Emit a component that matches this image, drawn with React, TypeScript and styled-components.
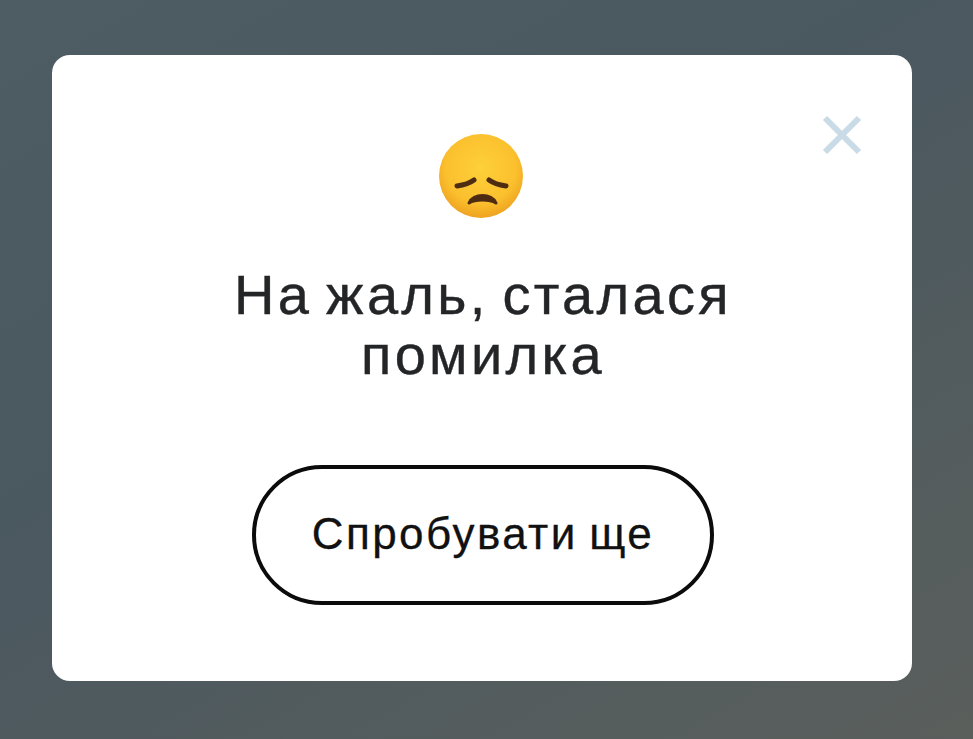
import React from "react";
import styled, { createGlobalStyle } from "styled-components";

const GlobalStyle = createGlobalStyle`
  html, body {
    margin: 0;
    padding: 0;
    height: 100%;
  }
  #root {
    height: 100%;
  }
`;

const PageEl = styled.div`
  box-sizing: border-box;
  width: 100%;
  height: 739px;
  overflow: hidden;
  padding: 55px 61px 58px 52px;
  background: linear-gradient(150deg, #4e5d63 0%, #4a5860 40%, #5a5f5c 100%);
  font-family: "Liberation Sans", Arial, sans-serif;
`;

const CardEl = styled.div`
  position: relative;
  box-sizing: border-box;
  height: 100%;
  padding-top: 78px;
  background-color: #ffffff;
  border-radius: 18px;
  display: flex;
  flex-direction: column;
  align-items: center;
`;

const CloseEl = styled.button`
  position: absolute;
  top: 58px;
  right: 48px;
  width: 44px;
  height: 44px;
  padding: 0;
  border: none;
  background: none;
  display: flex;
`;

const EmojiEl = styled.svg`
  width: 90px;
  height: 90px;
  flex-shrink: 0;
`;

const TitleEl = styled.h1`
  width: 600px;
  margin: 42px 0 0 2px;
  font-size: 56px;
  font-weight: 400;
  line-height: 60px;
  letter-spacing: 3.3px;
  word-spacing: -5px;
  text-align: center;
  color: #232527;
  -webkit-text-stroke: 0.4px #232527;
`;

const RetryEl = styled.button`
  box-sizing: border-box;
  width: 462px;
  height: 140px;
  margin: 80px 0 0 2px;
  padding-bottom: 4px;
  background-color: #ffffff;
  border: 4px solid #0b0b0b;
  border-radius: 70px;
  font-family: inherit;
  font-size: 44px;
  letter-spacing: 2.4px;
  word-spacing: -3px;
  color: #111111;
  -webkit-text-stroke: 0.3px #111111;
`;

function App() {
  return (
    <PageEl>
      <GlobalStyle />
      <CardEl>
        <CloseEl aria-label="Закрити">
          <svg width="44" height="44" viewBox="0 0 44 44" fill="none">
            <path d="M5 5L39 39M39 5L5 39" stroke="#c9dbe6" strokeWidth="6" />
          </svg>
        </CloseEl>
        <EmojiEl viewBox="0 0 90 90">
          <defs>
            <radialGradient id="face" cx="50%" cy="40%" r="60%">
              <stop offset="0%" stopColor="#fdd03a" />
              <stop offset="70%" stopColor="#fbc02d" />
              <stop offset="100%" stopColor="#eea321" />
            </radialGradient>
          </defs>
          <circle cx="44" cy="43" r="42" fill="url(#face)" />
          <path
            d="M20 53C27 52 33 50 37 47"
            fill="none"
            stroke="#4e2c12"
            strokeWidth="5"
            strokeLinecap="round"
          />
          <path
            d="M69 53C62 52 56 50 52 47"
            fill="none"
            stroke="#4e2c12"
            strokeWidth="5"
            strokeLinecap="round"
          />
          <path
            d="M32 70C36 60 55 60 59 70C53 66 38 66 32 70Z"
            fill="#4e2c12"
            stroke="#4e2c12"
            strokeWidth="3"
            strokeLinejoin="round"
          />
        </EmojiEl>
        <TitleEl>
          На жаль, сталася
          <br />
          помилка
        </TitleEl>
        <RetryEl>Спробувати ще</RetryEl>
      </CardEl>
    </PageEl>
  );
}

export default App;
